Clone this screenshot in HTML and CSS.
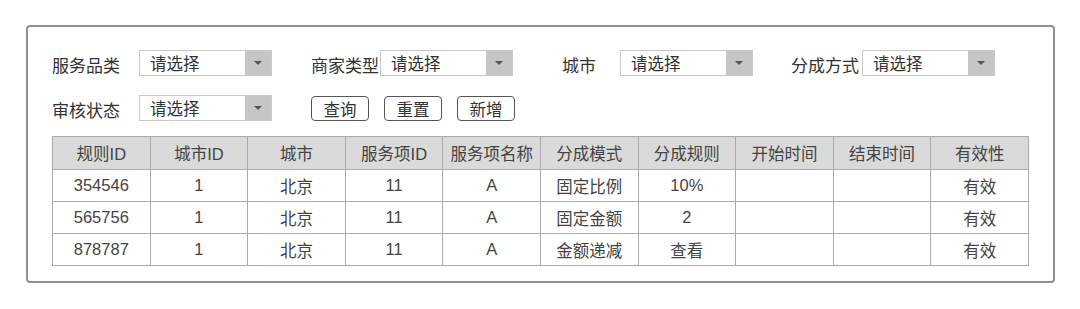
FILE: index.html
```html
<!DOCTYPE html>
<html lang="zh">
<head>
  <meta charset="UTF-8">
  <title>分成规则</title>
  <link rel="stylesheet" href="styles.css">
</head>
<body>
  <div class="panel">
    <div class="filtros">
      <div class="linha">
        <span class="rotulo">服务品类</span>
        <div class="escolha"><span>请选择</span><i class="seta"></i></div>

        <span class="rotulo rotulo-comerciante">商家类型</span>
        <div class="escolha"><span>请选择</span><i class="seta"></i></div>

        <span class="rotulo rotulo-cidade">城市</span>
        <div class="escolha"><span>请选择</span><i class="seta"></i></div>

        <span class="rotulo rotulo-modo">分成方式</span>
        <div class="escolha"><span>请选择</span><i class="seta"></i></div>
      </div>

      <div class="linha">
        <span class="rotulo">审核状态</span>
        <div class="escolha"><span>请选择</span><i class="seta"></i></div>

        <div class="acoes">
          <button class="botao">查询</button>
          <button class="botao">重置</button>
          <button class="botao">新增</button>
        </div>
      </div>
    </div>

    <table class="tabela">
      <thead>
        <tr>
          <th>规则ID</th>
          <th>城市ID</th>
          <th>城市</th>
          <th>服务项ID</th>
          <th>服务项名称</th>
          <th>分成模式</th>
          <th>分成规则</th>
          <th>开始时间</th>
          <th>结束时间</th>
          <th>有效性</th>
        </tr>
      </thead>
      <tbody>
        <tr>
          <td>354546</td><td>1</td><td>北京</td><td>11</td><td>A</td>
          <td>固定比例</td><td>10%</td><td></td><td></td><td>有效</td>
        </tr>
        <tr>
          <td>565756</td><td>1</td><td>北京</td><td>11</td><td>A</td>
          <td>固定金额</td><td>2</td><td></td><td></td><td>有效</td>
        </tr>
        <tr>
          <td>878787</td><td>1</td><td>北京</td><td>11</td><td>A</td>
          <td>金额递减</td><td>查看</td><td></td><td></td><td>有效</td>
        </tr>
      </tbody>
    </table>
  </div>
</body>
</html>
```

FILE: styles.css
```css
* {
  box-sizing: border-box;
  font-family: "Liberation Sans", "Noto Sans CJK SC", sans-serif;
}

body {
  margin: 0;
  padding: 25px 26px;
  background: #fff;
  color: #333;
  font-size: 16.5px;
}

.panel {
  width: 1029px;
  height: 258px;
  padding: 23px 24px 0;
  border: 2px solid #8e9196;
  border-radius: 4px;
}

.filtros {
  display: flex;
  flex-direction: column;
  gap: 19px;
}

.linha {
  display: flex;
  align-items: center;
  height: 26px;
}

.rotulo {
  width: 87px;
  flex-shrink: 0;
  padding-top: 2px;
  font-size: 17px;
  white-space: nowrap;
}

.rotulo-comerciante { width: 69px; margin-left: 39px; }
.rotulo-cidade { width: 58px; margin-left: 49px; }
.rotulo-modo { width: 71px; margin-left: 38px; }

.escolha {
  display: flex;
  align-items: stretch;
  width: 133px;
  height: 26px;
  border: 1px solid #c9c9c9;
  background: #fff;
}

.escolha span {
  flex: 1;
  padding: 2px 0 0 10px;
  line-height: 22px;
}

.seta {
  width: 26px;
  background: #c6c6c6;
  display: flex;
  align-items: center;
  justify-content: center;
}

.seta::after {
  content: "";
  border-left: 4px solid transparent;
  border-right: 4px solid transparent;
  border-top: 4px solid #555;
}

.acoes {
  display: flex;
  gap: 15px;
  margin-left: 39px;
}

.botao {
  width: 58px;
  height: 25px;
  padding: 0;
  font-size: 16.5px;
  color: #333;
  background: #fff;
  border: 1.5px solid #555;
  border-radius: 4px;
}

.tabela {
  width: 977px;
  margin-top: 15px;
  border-collapse: collapse;
  table-layout: fixed;
  color: #444;
}

.tabela th,
.tabela td {
  border: 1px solid #ababab;
  text-align: center;
  font-weight: normal;
  padding: 0;
}

.tabela th {
  height: 33px;
  background: #dadada;
}

.tabela td {
  height: 32px;
}
```
